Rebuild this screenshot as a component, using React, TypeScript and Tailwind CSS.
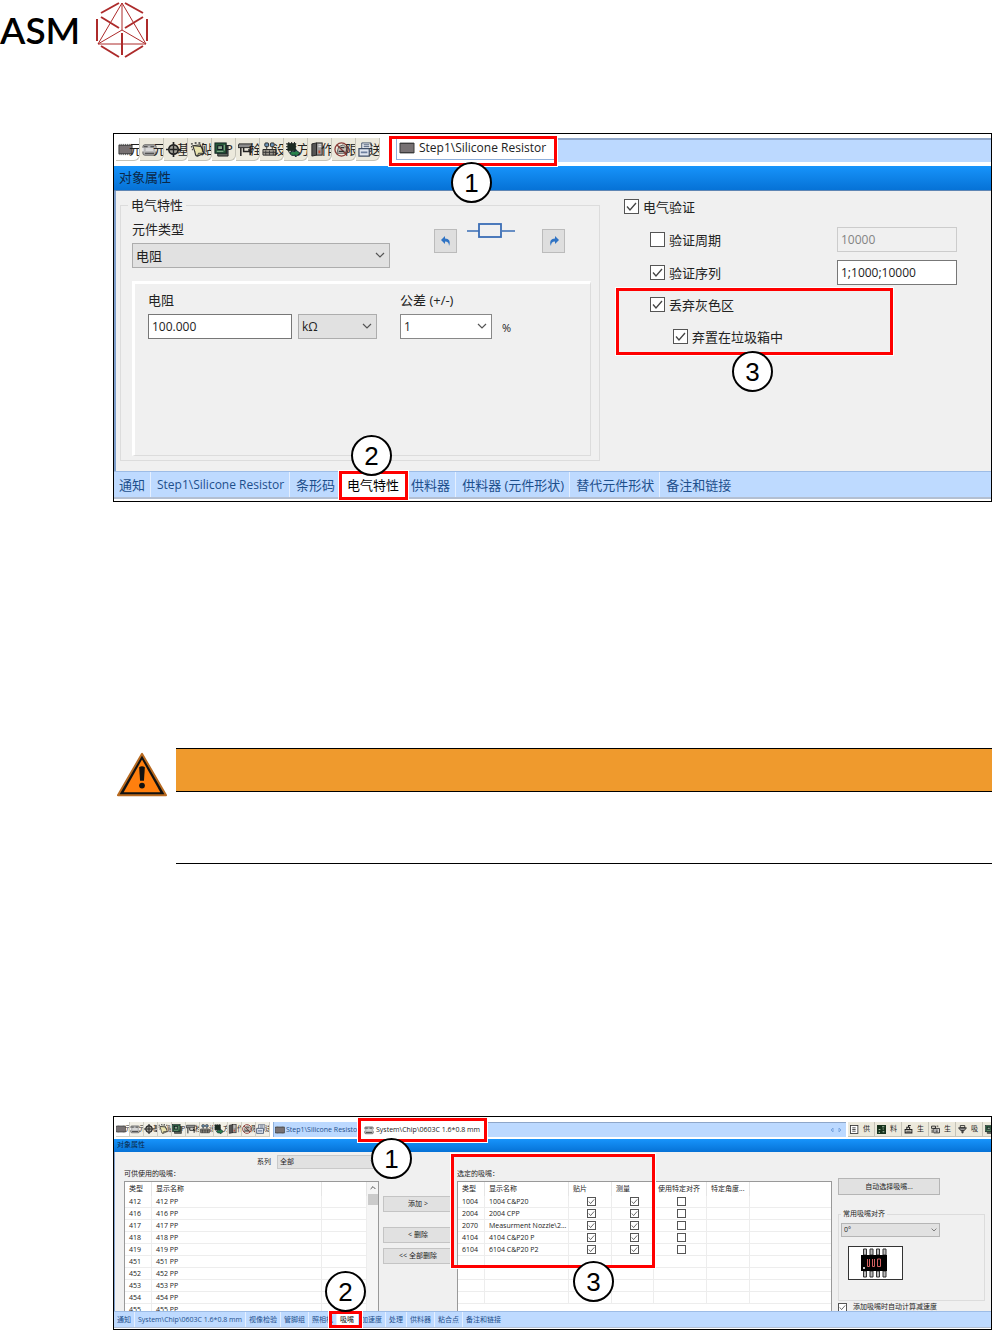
import type { ReactNode } from "react";
import clsx from "clsx";

type IconName =
  | "chip"
  | "part"
  | "fiducial"
  | "paste"
  | "board"
  | "gantry"
  | "setup"
  | "rotate"
  | "server"
  | "limit"
  | "feeder"
  | "list"
  | "grid"
  | "machine"
  | "line"
  | "nozzle";

const icons: Record<IconName, ReactNode> = {
  chip: (
    <>
      <path d="M2 2v12M4 2v12M6 2v12M8 2v12M10 2v12M12 2v12M14 2v12" stroke="#666" strokeWidth="1" />
      <rect x="1" y="3.500" width="14" height="9" fill="#777173" stroke="#3c3c3c" />
    </>
  ),
  part: (
    <>
      <rect x="1" y="3" width="14" height="11" rx="2" fill="#b9b9b9" stroke="#555" />
      <path d="M2 5h4M9 5h4M3 12h10" stroke="#333" strokeWidth="1.200" />
      <path d="M1 6v4M15 6v4" stroke="#fff" strokeWidth="1.500" />
      <path d="M4 8h8" stroke="#d8d8d8" strokeWidth="3" />
    </>
  ),
  fiducial: (
    <>
      <path d="M8 0v16M0 8h16" stroke="#222" strokeWidth="1.800" />
      <circle cx="8" cy="8" r="5" fill="#a5a39a" stroke="#222" strokeWidth="1.800" />
      <path d="M8 4v8M4 8h8" stroke="#222" strokeWidth="1.500" />
    </>
  ),
  paste: (
    <>
      <path d="M1 2h2M5 1h2M9 1h2M13 2h2M1 5h1M2 8h1" stroke="#333" strokeWidth="1.500" />
      <path d="M3 4l8-1 4 9-7 3c-3 0-2-3-3-5z" fill="#e9e3ad" stroke="#333" strokeWidth="1.200" />
      <path d="M4 4l8 1 2 3M8 15l1-3 6 0" stroke="#333" fill="none" />
    </>
  ),
  board: (
    <>
      <path d="M4 4h11v11H4z" fill="#5c645c" stroke="#222" />
      <rect x="1" y="1" width="12" height="11" fill="#27583a" stroke="#122" />
      <rect x="4" y="4" width="5" height="4" fill="#88a98b" stroke="#112" />
      <path d="M3 10h7M11 3v6" stroke="#8fb594" />
    </>
  ),
  gantry: (
    <>
      <path d="M1 2h14l-2 4H0z" fill="#8d8d8d" stroke="#222" />
      <path d="M3 6v9M6 6v4h7M13 5v9M11 8l4 3" stroke="#222" strokeWidth="1.600" fill="none" />
    </>
  ),
  setup: (
    <>
      <path d="M1 8h14v6H1z" fill="#9b978c" stroke="#222" />
      <rect x="3" y="1" width="4" height="4" rx="1" fill="#6b94b8" stroke="#222" />
      <rect x="9" y="1" width="4" height="4" rx="1" fill="#6b94b8" stroke="#222" />
      <path d="M5 5v3M11 5v3M1 11h14M4 9v5M8 9v5M12 9v5" stroke="#333" />
    </>
  ),
  rotate: (
    <>
      <path d="M3 0v11M6 0v11M9 0v11M0 2h11M0 5h11M0 8h11" stroke="#111" />
      <rect x="1.500" y="1.500" width="9" height="8" fill="#1d2b22" />
      <path d="M4 11c0 3 3 4 6 3v2l5-4-5-4v2H7z" fill="#27804a" stroke="#123" />
    </>
  ),
  server: (
    <>
      <path d="M2 2l5-1v13l-5 1z" fill="#555" stroke="#222" />
      <rect x="7" y="1" width="6" height="13" fill="#9a9a9a" stroke="#222" />
      <path d="M9 3h3M9 5h3" stroke="#eee" />
      <path d="M10 9v3" stroke="#c34b32" strokeWidth="2" />
    </>
  ),
  limit: (
    <>
      <path d="M3 12h9l2-5-4-4-5 2z" fill="#c9c3bd" stroke="#555" />
      <circle cx="8" cy="8" r="7" fill="none" stroke="#8c3d38" strokeWidth="1.400" />
      <path d="M3 3l10 10" stroke="#8c3d38" strokeWidth="1.400" />
      <path d="M5 10h6M7 6h4" stroke="#333" strokeWidth="1.400" />
    </>
  ),
  feeder: (
    <>
      <path d="M4 1h10v9H4z" fill="#eef1f5" stroke="#40506a" />
      <path d="M6 3h6M6 5h6" stroke="#40506a" />
      <path d="M1 7h11v8H1z" fill="#dfe5ee" stroke="#40506a" strokeWidth="1.300" />
      <path d="M3 10h7v2H3z" fill="#6d7f9e" />
    </>
  ),
  list: (
    <>
      <rect x="1" y="1" width="13" height="14" fill="#fff" stroke="#333" strokeWidth="1.500" />
      <path d="M4 5h6M4 8h6M4 11h6" stroke="#333" strokeWidth="1.500" />
    </>
  ),
  grid: (
    <>
      <rect x="0" y="0" width="16" height="16" fill="#16321c" />
      <path d="M9 3h4M3 8h3M10 7h2M3 13h2M10 12h3" stroke="#a9c3a9" strokeWidth="2" />
    </>
  ),
  machine: (
    <>
      <path d="M2 8h12v6H2zM5 8V4h5v4M8 4V1h4" fill="none" stroke="#222" strokeWidth="1.800" />
      <path d="M4 11h8" stroke="#222" strokeWidth="1.500" />
    </>
  ),
  line: (
    <>
      <path d="M5 6h10v8H5z" fill="#ddd" stroke="#222" strokeWidth="1.500" />
      <path d="M1 2h7v4H1zM10 2h3M8 9h4M8 12h4M2 8v6" fill="none" stroke="#222" strokeWidth="1.600" />
    </>
  ),
  nozzle: (
    <>
      <path d="M1 5h14l-4 5H5zM7 10v4h2v-4" fill="#999" stroke="#222" strokeWidth="1.500" />
      <path d="M4 1h8v4H4z" fill="none" stroke="#222" strokeWidth="1.500" />
    </>
  ),
};

function Icon({ name, className }: { name: IconName; className?: string }) {
  return (
    <svg viewBox="0 0 16 16" fill="none" className={clsx("shrink-0", className)} aria-hidden="true">
      {icons[name]}
    </svg>
  );
}

const tools: { icon: IconName; text: string }[] = [
  { icon: "chip", text: "元" },
  { icon: "part", text: "元" },
  { icon: "fiducial", text: "基" },
  { icon: "paste", text: "贴" },
  { icon: "board", text: "P" },
  { icon: "gantry", text: "栓" },
  { icon: "setup", text: "设" },
  { icon: "rotate", text: "方" },
  { icon: "server", text: "作" },
  { icon: "limit", text: "限" },
  { icon: "feeder", text: "送" },
];

const sideTools: { icon: IconName; text: string }[] = [
  { icon: "list", text: "供" },
  { icon: "grid", text: "料" },
  { icon: "machine", text: "生" },
  { icon: "line", text: "生" },
  { icon: "nozzle", text: "吸" },
  { icon: "board", text: "" },
];

const nozzles = ["412", "416", "417", "418", "419", "451", "452", "453", "454", "455"];

const selected = [
  ["1004", "1004 C&P20"],
  ["2004", "2004 CPP"],
  ["2070", "Measurment Nozzle\\2..."],
  ["4104", "4104 C&P20 P"],
  ["6104", "6104 C&P20 P2"],
];

function Callout({ n, className }: { n: number; className: string }) {
  return (
    <span
      className={clsx(
        "absolute z-20 flex size-[41px] items-center justify-center rounded-full border-2 border-black bg-white font-['Liberation_Sans',sans-serif] text-[26px] leading-none text-black",
        className
      )}
    >
      {n}
    </span>
  );
}

function Marker({ className }: { className: string }) {
  return (
    <span
      className={clsx("pointer-events-none absolute z-10 border-3 border-[#ff0000] ring-1 ring-white", className)}
    />
  );
}

function Chevron({ className }: { className?: string }) {
  return (
    <svg viewBox="0 0 10 6" fill="none" className={clsx("pointer-events-none absolute", className)} aria-hidden="true">
      <path d="M1 1l4 4 4-4" stroke="#555" strokeWidth="1.200" />
    </svg>
  );
}

function Select({
  value,
  label,
  id,
  small,
  className,
}: {
  value: string;
  label?: string;
  id?: string;
  small?: boolean;
  className: string;
}) {
  return (
    <div className={clsx("relative", small ? "h-[14px]" : "h-[25px]")}>
      <select
        id={id}
        aria-label={label}
        className={clsx("h-full appearance-none border text-[#222]", small ? "pl-[2px]" : "pl-[3px]", className)}
      >
        <option>{value}</option>
      </select>
      <Chevron className={small ? "top-[5px] right-[3px] w-[6px]" : "top-[9px] right-[5px] w-[10px]"} />
    </div>
  );
}

function Check({ label, checked, small }: { label?: string; checked?: boolean; small?: boolean }) {
  return (
    <span className={clsx("relative block shrink-0", small ? "size-[9px]" : "size-[15px]")}>
      <input
        type="checkbox"
        aria-label={label}
        defaultChecked={checked}
        className="peer block size-full appearance-none border border-[#555] bg-white"
      />
      <svg
        viewBox="0 0 15 15"
        fill="none"
        className="pointer-events-none absolute inset-0 hidden size-full peer-checked:block"
        aria-hidden="true"
      >
        <path d="M3 7.500l3 3.500 6-7" stroke="#444" strokeWidth="1.300" />
      </svg>
    </span>
  );
}

function CheckRow({ text, checked }: { text: string; checked?: boolean }) {
  return (
    <label className="flex h-[25px] items-center gap-1">
      <Check checked={checked} />
      <span>{text}</span>
    </label>
  );
}

function Logo() {
  return (
    <header className="flex h-[58px] items-center">
      <span className="w-[95px] pt-px font-['Lato',sans-serif] text-[37px] leading-none font-semibold text-black">
        ASM
      </span>
      <svg viewBox="0 0 54 58" className="h-[58px] w-[54px]" fill="none" stroke="#ad2b2b" aria-hidden="true">
        <path d="M27 3L3 44h48zM27 3v27M27 30L3 44M27 30l24 14" strokeWidth="1" />
        <path
          d="M6 13l18-10M30 3l18 10M2 19v22M52 19v22M6 46l18 11M48 46L30 57M6 17l18 11M48 17L30 28M27 33v22"
          strokeWidth="2"
        />
      </svg>
    </header>
  );
}

function BottomTab({ children, active, small }: { children: ReactNode; active?: boolean; small?: boolean }) {
  return (
    <button
      type="button"
      className={clsx(
        "h-full border-r whitespace-nowrap",
        small ? "px-[3px]" : "pr-[5px] pl-[6px] first:pl-[5px]",
        active ? "border-white bg-white text-black" : "border-[#e4efff] text-[#1d4f8c] last:border-r-0"
      )}
    >
      {children}
    </button>
  );
}

function ElectricalFigure() {
  return (
    <section className="relative ml-[113px] overflow-hidden border border-black bg-white text-[13px] leading-[18px] text-[#222]">
      <div className="flex h-8 items-start pt-1">
        <div className="flex pl-[2px]">
          {tools.map((tool, i) => (
            <button
              key={i}
              type="button"
              className={clsx(
                "flex h-[23px] w-6 items-center overflow-hidden rounded-br-md border-r border-b border-[#c5c3b8] pl-[2px]",
                i === 0 ? "bg-white" : "bg-[#ece9dc]"
              )}
            >
              <Icon name={tool.icon} className="size-[15px]" />
              <span className="-ml-1">{tool.text}</span>
            </button>
          ))}
        </div>
        <button
          type="button"
          className="ml-4 flex h-[22px] w-[158px] shrink-0 items-center gap-1 border-b border-l border-[#8fb0dc] pb-px pl-[2px] text-[12px] whitespace-nowrap"
        >
          <Icon name="chip" className="size-[16px]" />
          Step1\Silicone Resistor
        </button>
        <div className="ml-1 h-6 grow border-t-2 border-[#8ea6c9] bg-[#bcd9ff]" />
      </div>
      <div className="h-[25px] border-b border-[#5f86b4] bg-linear-to-b from-[#1794fb] to-[#0672d6] pl-[5px] leading-[22px] text-[#0b2848]">
        对象属性
      </div>

      <div className="flex h-[280px] items-start border-l-2 border-[#7f9fcb] bg-[#f0f0f0]">
        <fieldset className="mt-[5px] ml-1 w-[480px] shrink-0 border border-[#dcdcdc] pr-2 pb-1 pl-[11px]">
          <legend className="-ml-1 px-[3px]">电气特性</legend>
          <div className="flex items-start">
            <div className="mt-[6px] mr-11 w-[258px]">
              <label htmlFor="kind" className="mb-[5px] block">
                元件类型
              </label>
              <Select id="kind" value="电阻" className="w-full border-[#adadad] bg-[#e1e1e1]" />
            </div>
            <button
              type="button"
              aria-label="左转"
              className="mt-[15px] flex h-6 w-[23px] items-center justify-center border border-[#bbb] bg-[#dedede]"
            >
              <svg viewBox="0 0 10 10" className="size-[10px]" aria-hidden="true">
                <path d="M0 4l4-4v2.500c4 0 6 3 4 7.500 0-3-1-4.500-4-4.500V8z" fill="#2f73c4" />
              </svg>
            </button>
            <svg viewBox="0 0 48 16" className="mt-2 ml-[10px] h-4 w-12" fill="none" stroke="#3a6db5" aria-hidden="true">
              <path d="M0 9h12M35 9h13" strokeWidth="1.500" />
              <rect x="12" y="2" width="22" height="13" strokeWidth="1.800" />
            </svg>
            <button
              type="button"
              aria-label="右转"
              className="mt-[15px] ml-[27px] flex h-6 w-[23px] items-center justify-center border border-[#bbb] bg-[#dedede]"
            >
              <svg viewBox="0 0 10 10" className="size-[10px]" aria-hidden="true">
                <path d="M10 4L6 0v2.500C2 2.500 0 5.500 2 10c0-3 1-4.500 4-4.500V8z" fill="#2f73c4" />
              </svg>
            </button>
          </div>
          <div className="mt-[13px] flex h-[175px] items-start border-t-3 border-r border-b border-l-3 border-t-white border-r-[#dcdcdc] border-b-[#dcdcdc] border-l-white pt-[7px] pl-[13px]">
            <div className="w-36">
              <label htmlFor="resistance" className="mb-[5px] block">
                电阻
              </label>
              <input
                id="resistance"
                defaultValue="100.000"
                className="h-[25px] w-full border border-[#777] bg-white px-[3px] text-[12px]"
              />
            </div>
            <div className="mt-[23px] ml-[6px] text-[12px]">
              <Select label="单位" value="kΩ" className="w-[79px] border-[#adadad] bg-[#e1e1e1]" />
            </div>
            <div className="ml-[23px] w-[92px]">
              <label htmlFor="tolerance" className="mb-[5px] block">
                公差 (+/-)
              </label>
              <div className="text-[12px]">
                <Select id="tolerance" value="1" className="w-full border-[#888] bg-white" />
              </div>
            </div>
            <span className="mt-7 ml-[10px] text-[11px]">%</span>
          </div>
        </fieldset>

        <div className="ml-6 pt-[3px]">
          <CheckRow text="电气验证" checked />
          <div className="mt-2 ml-[26px] grid grid-cols-[187px_120px] gap-y-2 text-[13px]">
            <CheckRow text="验证周期" />
            <input
              aria-label="验证周期值"
              disabled
              defaultValue="10000"
              className="h-[25px] border border-[#ccc] bg-[#f0f0f0] px-[3px] text-[12px] text-[#838383]"
            />
            <CheckRow text="验证序列" checked />
            <input
              aria-label="验证序列值"
              defaultValue="1;1000;10000"
              className="h-[25px] border border-[#777] bg-white px-[3px] text-[12px]"
            />
          </div>
          <div className="mt-[7px] ml-[26px]">
            <CheckRow text="丢弃灰色区" checked />
          </div>
          <div className="mt-[7px] ml-[49px]">
            <CheckRow text="弃置在垃圾箱中" checked />
          </div>
        </div>
      </div>

      <nav className="mb-[2px] flex h-7 border-t border-b-2 border-t-[#9dbce6] border-b-[#b3bfd2] bg-[#bedaff]">
        <BottomTab>通知</BottomTab>
        <BottomTab>
          <span className="text-[12px]">Step1\Silicone Resistor</span>
        </BottomTab>
        <BottomTab>条形码</BottomTab>
        <BottomTab active>电气特性</BottomTab>
        <BottomTab>供料器</BottomTab>
        <BottomTab>供料器 (元件形状)</BottomTab>
        <BottomTab>替代元件形状</BottomTab>
        <BottomTab>备注和链接</BottomTab>
      </nav>

      <Marker className="top-[2px] left-[275px] h-[30px] w-[168px]" />
      <Callout n={1} className="top-[28px] left-[337px]" />
      <Marker className="top-[154px] left-[502px] h-[67px] w-[277px]" />
      <Callout n={3} className="top-[217px] left-[618px]" />
      <Marker className="top-[337px] left-[225px] h-[29px] w-[69px]" />
      <Callout n={2} className="top-[301px] left-[237px]" />
    </section>
  );
}

function Warning() {
  return (
    <section className="mt-[246px] ml-[113px] flex items-start">
      <svg viewBox="0 0 54 48" className="mt-[2px] mr-2 ml-[3px] h-12 w-[52px] shrink-0" aria-label="警告">
        <path
          d="M27 3L2 46h50z"
          fill="#111"
          stroke="#b86a20"
          strokeWidth="2"
          strokeLinejoin="round"
        />
        <path d="M27 9L8 43h38z" fill="#ff7f0e" />
        <path d="M24 17q3-2 6 0l-1 14h-4z" fill="#111" />
        <circle cx="27" cy="36" r="3" fill="#111" />
      </svg>
      <div className="grow">
        <div className="h-11 border-y border-black bg-[#ef9a2d]" />
        <div className="h-[72px] border-b border-black" />
      </div>
    </section>
  );
}

const th = "border-r border-[#e5e5e5] px-1 text-left font-normal";
const td = "border-r border-b border-[#ededed] px-1";

function NozzleFigure() {
  return (
    <section className="relative mt-[252px] ml-[113px] overflow-hidden border border-black bg-white text-[7px] leading-[10px] text-[#222]">
      <div className="flex h-[22px] items-start overflow-hidden pt-[5px]">
        <div className="flex pl-[2px]">
          {tools.map((tool, i) => (
            <button
              key={i}
              type="button"
              className={clsx(
                "flex h-[15px] w-[14px] items-center overflow-hidden border-r border-b border-[#d0cec4]",
                i === 0 ? "bg-white" : "bg-[#f1efe6]"
              )}
            >
              <Icon name={tool.icon} className="size-[10px]" />
              <span className="-ml-px">{tool.text}</span>
            </button>
          ))}
        </div>
        <button
          type="button"
          className="ml-[3px] flex h-[15px] w-[85px] shrink-0 items-center gap-px overflow-hidden border-l border-[#8fb0dc] bg-[#bcd9ff] pl-px whitespace-nowrap text-[#1d4f8c]"
        >
          <Icon name="chip" className="size-[10px]" />
          Step1\Silicone Resistor
        </button>
        <button type="button" className="flex h-[15px] w-[129px] shrink-0 items-center gap-[2px] pl-[6px] whitespace-nowrap">
          <Icon name="part" className="size-[10px]" />
          System\Chip\0603C 1.6*0.8 mm
        </button>
        <div className="flex h-[15px] grow items-center justify-end gap-1 border-t border-[#8ea6c9] bg-[#bcd9ff] pr-1">
          <svg viewBox="0 0 12 6" className="h-[6px] w-3" fill="none" stroke="#7ba6e0" aria-hidden="true">
            <path d="M3 1L1 3l2 2zM9 1l2 2-2 2z" />
          </svg>
        </div>
        <div className="ml-[2px] flex w-[143px] shrink-0 overflow-hidden">
          {sideTools.map((tool, i) => (
            <button
              key={i}
              type="button"
              className="flex h-[15px] w-[27px] shrink-0 items-center gap-1 border-r border-b border-[#c5c3b8] bg-[#ece9dc] pl-[2px]"
            >
              <Icon name={tool.icon} className="size-[9px]" />
              <span>{tool.text}</span>
            </button>
          ))}
        </div>
      </div>
      <div className="h-[13px] bg-linear-to-b from-[#1794fb] to-[#0672d6] pl-[3px] leading-[12px] text-[#0b2848]">
        对象属性
      </div>

      <div className="flex h-[159px] items-start overflow-hidden border-l border-[#7f9fcb] bg-[#f0f0f0] pl-[9px]">
        <div className="w-[255px] shrink-0 pt-[3px]">
          <div className="flex items-center justify-end gap-[6px]">
            <label htmlFor="series">系列</label>
            <Select small id="series" value="全部" className="w-[102px] border-[#c9c9c9] bg-[#e1e1e1]" />
          </div>
          <div className="mb-[2px]">可供使用的吸嘴：</div>
          <div className="flex h-[132px] items-start border border-[#999] bg-white">
            <table className="w-[242px] table-fixed border-separate border-spacing-0">
              <colgroup>
                <col className="w-[27px]" />
                <col />
                <col className="w-[45px]" />
              </colgroup>
              <thead>
                <tr className="h-[14px]">
                  <th className={th}>类型</th>
                  <th className={th}>显示名称</th>
                  <th className={th} />
                </tr>
              </thead>
              <tbody>
                {nozzles.map((nozzle) => (
                  <tr key={nozzle} className="h-3">
                    <td className={td}>{nozzle}</td>
                    <td className={td}>{nozzle} PP</td>
                    <td className={td} />
                  </tr>
                ))}
              </tbody>
            </table>
            <div className="flex h-full grow flex-col items-center bg-[#f5f5f5] pt-1">
              <svg viewBox="0 0 10 6" className="mb-1 w-[6px]" fill="none" aria-hidden="true">
                <path d="M1 5l4-4 4 4" stroke="#444" strokeWidth="1.500" />
              </svg>
              <div className="h-[11px] w-[10px] bg-[#cbcbcb]" />
            </div>
          </div>
        </div>

        <div className="ml-1 flex w-[70px] shrink-0 flex-col pt-11">
          <button type="button" className="mb-[15px] h-4 border border-[#c4c4c4] bg-[#e1e1e1]">
            添加 &gt;
          </button>
          <button type="button" className="mb-[5px] h-4 border border-[#c4c4c4] bg-[#e1e1e1]">
            &lt; 删除
          </button>
          <button type="button" className="h-4 border border-[#c4c4c4] bg-[#e1e1e1]">
            &lt;&lt; 全部删除
          </button>
        </div>

        <div className="ml-1 w-[375px] shrink-0 pt-[17px]">
          <div className="mb-[2px]">选定的吸嘴：</div>
          <div className="h-[132px] border border-[#999] bg-white">
            <table className="w-full table-fixed border-separate border-spacing-0">
              <colgroup>
                <col className="w-[27px]" />
                <col className="w-[84px]" />
                <col className="w-[43px]" />
                <col className="w-[42px]" />
                <col className="w-[53px]" />
                <col className="w-[43px]" />
                <col />
              </colgroup>
              <thead>
                <tr className="h-[14px] whitespace-nowrap">
                  <th className={th}>类型</th>
                  <th className={th}>显示名称</th>
                  <th className={th}>贴片</th>
                  <th className={th}>测量</th>
                  <th className={th}>使用特定对齐</th>
                  <th className={th}>特定角度...</th>
                  <th />
                </tr>
              </thead>
              <tbody>
                {selected.map(([type, name]) => (
                  <tr key={type} className="h-3 whitespace-nowrap">
                    <td className={td}>{type}</td>
                    <td className={td}>{name}</td>
                    <td className={td}>
                      <div className="flex justify-center pl-[3px]">
                        <Check small checked label={`${type} 贴片`} />
                      </div>
                    </td>
                    <td className={td}>
                      <div className="flex justify-center pl-[3px]">
                        <Check small checked label={`${type} 测量`} />
                      </div>
                    </td>
                    <td className={td}>
                      <div className="flex justify-center pl-[3px]">
                        <Check small label={`${type} 使用特定对齐`} />
                      </div>
                    </td>
                    <td className={td} />
                    <td className="border-b border-[#ededed]" />
                  </tr>
                ))}
                {[0, 1, 2, 3].map((row) => (
                  <tr key={row} className="h-3">
                    {[0, 1, 2, 3, 4, 5].map((cell) => (
                      <td key={cell} className={td} />
                    ))}
                    <td className="border-b border-[#ededed]" />
                  </tr>
                ))}
              </tbody>
            </table>
          </div>
        </div>

        <div className="ml-[6px] w-[147px] shrink-0 pt-[26px]">
          <button type="button" className="h-[17px] w-[102px] border border-[#b5b5b5] bg-[#e1e1e1]">
            自动选择吸嘴...
          </button>
          <fieldset className="mt-[14px] h-[92px] border border-[#dcdcdc] pl-[2px]">
            <legend className="px-[2px]">常用吸嘴对齐</legend>
            <div className="mt-1 w-[99px]">
              <Select small label="常用吸嘴对齐" value="0°" className="w-full border-[#b5b5b5] bg-[#e1e1e1]" />
            </div>
            <svg viewBox="0 0 55 34" className="mt-[9px] ml-[7px] h-[34px] w-[55px]" aria-hidden="true">
              <rect x="0.500" y="0.500" width="54" height="33" fill="#fff" stroke="#333" />
              <path
                d="M15.500 3h3v6h-3zM22 3h3v6h-3zM28.500 3h3v6h-3zM35 3h3v6h-3zM15.500 25h3v6h-3zM22 25h3v6h-3zM28.500 25h3v6h-3zM35 25h3v6h-3z"
                fill="#bbb"
                stroke="#333"
              />
              <rect x="13" y="9" width="26" height="16" fill="#000" />
              <path
                d="M19.500 13v7.500h2M21.500 13v7.500M24.500 13v7.500h2M26.500 13v7.500M29.500 13v7.500h3M29.500 13h3v7.500"
                fill="none"
                stroke="#d06060"
              />
              <circle cx="16" cy="22" r="1" fill="#fff" />
            </svg>
          </fieldset>
          <label className="mt-px flex items-center gap-[6px]">
            <Check small checked />
            添加吸嘴时自动计算减速度
          </label>
        </div>
      </div>

      <nav className="mb-px flex h-[17px] border-t border-b border-t-[#9dbce6] border-b-[#b3bfd2] bg-[#bedaff]">
        <BottomTab small>通知</BottomTab>
        <BottomTab small>System\Chip\0603C 1.6*0.8 mm</BottomTab>
        <BottomTab small>视像检验</BottomTab>
        <BottomTab small>管脚组</BottomTab>
        <BottomTab small>照相机</BottomTab>
        <BottomTab small active>
          吸嘴
        </BottomTab>
        <BottomTab small>加速度</BottomTab>
        <BottomTab small>处理</BottomTab>
        <BottomTab small>供料器</BottomTab>
        <BottomTab small>粘合点</BottomTab>
        <BottomTab small>备注和链接</BottomTab>
      </nav>

      <Marker className="top-px left-[244px] h-6 w-[129px]" />
      <Callout n={1} className="top-[21px] left-[257px]" />
      <Marker className="top-[37px] left-[337px] h-[114px] w-[204px]" />
      <Callout n={3} className="top-[144px] left-[459px]" />
      <Marker className="top-[194px] left-[215px] h-[17px] w-[33px]" />
      <Callout n={2} className="top-[154px] left-[211px]" />
    </section>
  );
}

export default function App() {
  return (
    <main className="w-full overflow-hidden bg-white font-['Open_Sans','Noto_Sans_CJK_SC',sans-serif]">
      <Logo />
      <div className="pt-[75px]">
        <ElectricalFigure />
      </div>
      <Warning />
      <NozzleFigure />
    </main>
  );
}
